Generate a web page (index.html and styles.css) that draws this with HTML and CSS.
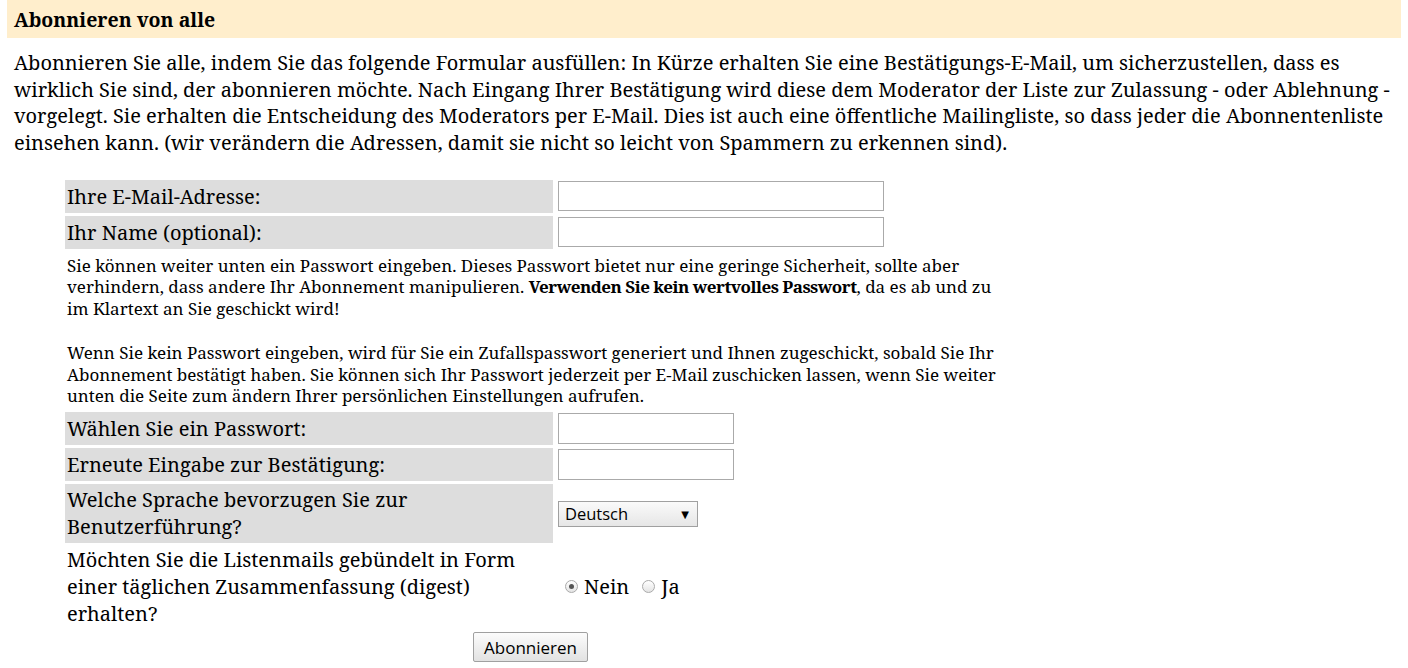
FILE: index.html
```html
<!DOCTYPE html>
<html lang="de">
<head>
<meta charset="utf-8">
<link rel="stylesheet" href="styles.css">
</head>
<body>
<div class="head">Abonnieren von alle</div>
<p class="intro">Abonnieren Sie alle, indem Sie das folgende Formular ausfüllen: In Kürze erhalten Sie eine Bestätigungs-E-Mail, um sicherzustellen, dass es wirklich Sie sind, der abonnieren möchte. Nach Eingang Ihrer Bestätigung wird diese dem Moderator der Liste zur Zulassung - oder Ablehnung - vorgelegt. Sie erhalten die Entscheidung des Moderators per E-Mail. Dies ist auch eine öffentliche Mailingliste, so dass jeder die Abonnentenliste einsehen kann. (wir verändern die Adressen, damit sie nicht so leicht von Spammern zu erkennen sind).</p>
<form class="form">
  <div class="label">Ihre E-Mail-Adresse:</div>
  <div class="field"><input class="text wide" type="text"></div>
  <div class="label">Ihr Name (optional):</div>
  <div class="field"><input class="text wide" type="text"></div>
  <div class="help">Sie können weiter unten ein Passwort eingeben. Dieses Passwort bietet nur eine geringe Sicherheit, sollte aber verhindern, dass andere Ihr Abonnement manipulieren. <b class="strong">Verwenden Sie kein wertvolles Passwort</b>, da es ab und zu im Klartext an Sie geschickt wird!<br><br>Wenn Sie kein Passwort eingeben, wird für Sie ein Zufallspasswort generiert und Ihnen zugeschickt, sobald Sie Ihr Abonnement bestätigt haben. Sie können sich Ihr Passwort jederzeit per E-Mail zuschicken lassen, wenn Sie weiter unten die Seite zum ändern Ihrer persönlichen Einstellungen aufrufen.</div>
  <div class="label">Wählen Sie ein Passwort:</div>
  <div class="field"><input class="text short" type="password"></div>
  <div class="label">Erneute Eingabe zur Bestätigung:</div>
  <div class="field"><input class="text short" type="password"></div>
  <div class="label two">Welche Sprache bevorzugen Sie zur Benutzerführung?</div>
  <div class="field"><div class="select">Deutsch<span class="arrow">▼</span></div></div>
  <div class="label plain">Möchten Sie die Listenmails gebündelt in Form einer täglichen Zusammenfassung (digest) erhalten?</div>
  <div class="field radios"><span class="radio on"></span><span class="opt">Nein</span><span class="radio"></span><span class="opt">Ja</span></div>
  <div class="submit"><button type="button" class="btn">Abonnieren</button></div>
</form>
</body>
</html>
```
FILE: styles.css
```css
body {
  margin: 0;
  font-family: "Noto Serif", "DejaVu Serif", serif;
  color: #000;
  background: #fff;
}
.head {
  margin: 0 7px;
  background: #ffeecc;
  height: 38px;
  box-sizing: border-box;
  padding: 6px 7px 0;
  font-weight: bold;
  font-size: 19.5px;
  line-height: 27px;
}
.intro {
  margin: 12px 14px 0 14px;
  font-size: 20px;
  line-height: 26.67px;
}
.form {
  margin: 23px 0 0 65px;
  width: 935px;
  display: grid;
  grid-template-columns: 488px 1fr;
  column-gap: 3px;
  row-gap: 3px;
}
.label {
  background: #dddddd;
  font-size: 20px;
  line-height: 27px;
  padding: 3px 2px;
  min-height: 27px;
}
.label.two {
  padding: 2px 2px 3px;
  width: 380px;
  padding-right: 106px;
}
.label.plain {
  background: transparent;
  padding: 0 2px;
}
.field {
  display: flex;
  align-items: center;
  padding-left: 2px;
}
.text {
  box-sizing: border-box;
  border: 1px solid #aaa;
  background: #fff;
  margin: 0;
}
.wide { width: 326px; height: 30px; }
.short { width: 176px; height: 31px; }
.help {
  grid-column: 1 / 3;
  font-size: 17px;
  line-height: 21.8px;
  padding: 3px 2px 2px;
}
.strong {
  letter-spacing: -0.5px;
}
.select {
  width: 140px;
  height: 26px;
  box-sizing: border-box;
  border: 1px solid #a0a0a0;
  background: linear-gradient(#fafafa, #e6e6e6);
  font-family: "Open Sans", "DejaVu Sans", sans-serif;
  font-size: 16.5px;
  line-height: 24px;
  padding-left: 6px;
  position: relative;
}
.arrow {
  position: absolute;
  right: 8px;
  top: 0;
  font-size: 10px;
}
.radios {
  font-size: 20px;
  padding-left: 9px;
}
.opt { margin-right: 13px; }
.radio {
  display: inline-block;
  width: 11px;
  height: 11px;
  border: 1px solid #aaa;
  border-radius: 50%;
  background: linear-gradient(#fff, #e4e4e4);
  margin-right: 6px;
  position: relative;
}
.radio.on::after {
  content: "";
  position: absolute;
  left: 3px;
  top: 3px;
  width: 5px;
  height: 5px;
  border-radius: 50%;
  background: #555;
}
.submit {
  grid-column: 1 / 3;
  padding-left: 408px;
  padding-top: 2px;
}
.btn {
  font-family: "Open Sans", "DejaVu Sans", sans-serif;
  font-size: 17px;
  height: 30px;
  padding: 0 10px;
  border: 1px solid #a0a0a0;
  border-radius: 2px;
  background: linear-gradient(#fcfcfc, #e2e2e2);
  color: #000;
}
```
